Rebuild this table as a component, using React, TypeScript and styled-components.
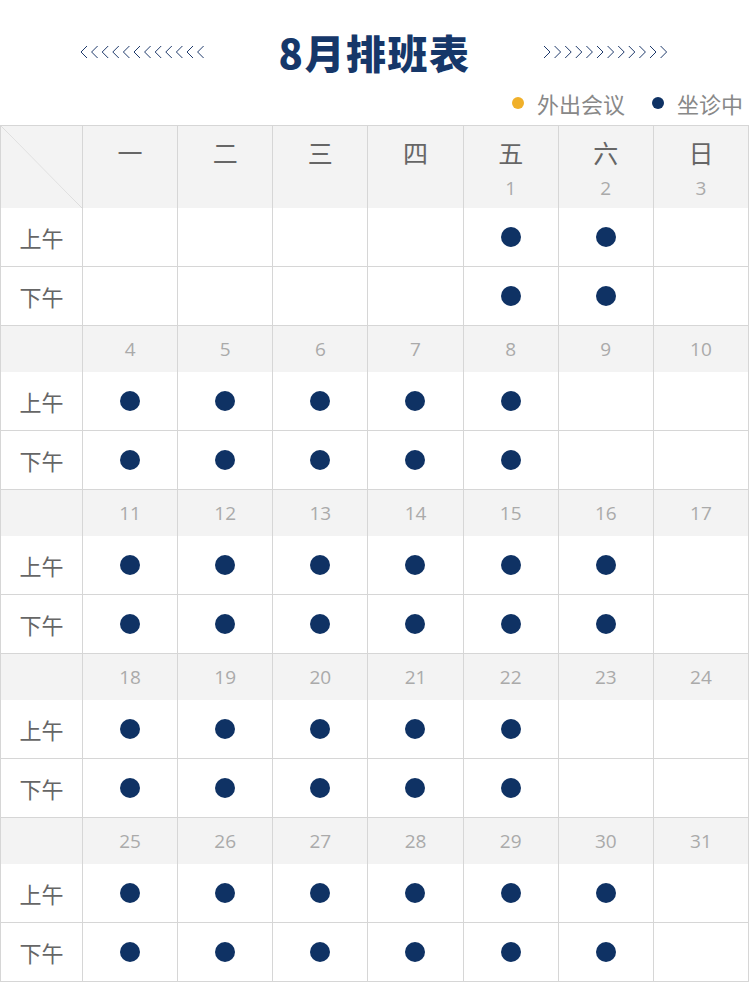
import React from 'react'
import styled, {createGlobalStyle} from 'styled-components'

const GlobalStyle = createGlobalStyle`
  body {
    margin: 0;
    background: #fff;
    font-family: "Open Sans", "Noto Sans CJK SC", sans-serif;
  }
`

const NAVY = '#0f3264'
const WEEKDAYS = ['一', '二', '三', '四', '五', '六', '日']

type Week = {
  dates: (number | null)[]
  am: number[]
  pm: number[]
}

const weeks: Week[] = [
  {dates: [null, null, null, null, 1, 2, 3], am: [0, 0, 0, 0, 1, 1, 0], pm: [0, 0, 0, 0, 1, 1, 0]},
  {dates: [4, 5, 6, 7, 8, 9, 10], am: [1, 1, 1, 1, 1, 0, 0], pm: [1, 1, 1, 1, 1, 0, 0]},
  {dates: [11, 12, 13, 14, 15, 16, 17], am: [1, 1, 1, 1, 1, 1, 0], pm: [1, 1, 1, 1, 1, 1, 0]},
  {dates: [18, 19, 20, 21, 22, 23, 24], am: [1, 1, 1, 1, 1, 0, 0], pm: [1, 1, 1, 1, 1, 0, 0]},
  {dates: [25, 26, 27, 28, 29, 30, 31], am: [1, 1, 1, 1, 1, 1, 0], pm: [1, 1, 1, 1, 1, 1, 0]},
]

const Chevrons = ({dir}: {dir: 'left' | 'right'}) => {
  const items = Array.from({length: 12}, (_, i) => i * 10.6)
  return (
    <svg width='126' height='14' viewBox='0 0 126 14'>
      {items.map((x) => (
        <polyline
          key={x}
          points={dir === 'left'
            ? `${x + 7},1 ${x + 1},7 ${x + 7},13`
            : `${x + 1},1 ${x + 7},7 ${x + 1},13`}
          fill='none'
          stroke='#1f3a6b'
          strokeWidth='1'
        />
      ))}
    </svg>
  )
}

const App = () => {
  return (
    <Page>
      <GlobalStyle />
      <TitleBar>
        <Chevrons dir='left' />
        <Title>8月排班表</Title>
        <Chevrons dir='right' />
      </TitleBar>
      <Legend>
        <LegendItem>
          <Dot $size={12} $color='#f0b02a' />
          外出会议
        </LegendItem>
        <LegendItem>
          <Dot $size={12} $color={NAVY} />
          坐诊中
        </LegendItem>
      </Legend>

      <Table>
        {weeks.map((week, wi) => (
          <React.Fragment key={wi}>
            {wi === 0 ? (
              <>
                <Corner />
                {WEEKDAYS.map((d, i) => (
                  <HeadCell key={d}>
                    <Weekday>{d}</Weekday>
                    {week.dates[i] !== null && <HeadDate>{week.dates[i]}</HeadDate>}
                  </HeadCell>
                ))}
              </>
            ) : (
              <>
                <DateCell />
                {week.dates.map((d, i) => (
                  <DateCell key={i}>{d}</DateCell>
                ))}
              </>
            )}
            <Label>上午</Label>
            {week.am.map((v, i) => (
              <Slot key={'am' + i}>{v ? <Dot $size={20} $color={NAVY} /> : null}</Slot>
            ))}
            <Label>下午</Label>
            {week.pm.map((v, i) => (
              <Slot key={'pm' + i}>{v ? <Dot $size={20} $color={NAVY} /> : null}</Slot>
            ))}
          </React.Fragment>
        ))}
      </Table>
    </Page>
  )
}

export default App

const Page = styled.div`
  width: 749px;
  height: 1000px;
  background: #fff;
`

const TitleBar = styled.div`
  height: 80px;
  padding-top: 12px;
  display: flex;
  align-items: center;
  justify-content: center;
  gap: 73px;
`

const Title = styled.h1`
  margin: 0;
  font-family: "Noto Sans CJK SC", sans-serif;
  font-size: 40px;
  font-weight: 900;
  color: #163769;
  line-height: 1;
  letter-spacing: 1.5px;
`

const Legend = styled.div`
  height: 22px;
  display: flex;
  justify-content: flex-end;
  align-items: center;
  gap: 27px;
  padding-right: 6px;
`

const LegendItem = styled.div`
  display: flex;
  align-items: center;
  gap: 13px;
  font-family: "Noto Sans CJK SC", sans-serif;
  font-size: 22px;
  color: #888;
`

const Dot = styled.span<{$size: number; $color: string}>`
  display: inline-block;
  width: ${(p) => p.$size}px;
  height: ${(p) => p.$size}px;
  border-radius: 50%;
  background: ${(p) => p.$color};
`

const Table = styled.div`
  margin-top: 11px;
  width: 749px;
  box-sizing: border-box;
  display: grid;
  grid-template-columns: 82px repeat(7, 1fr);
  border-top: 1px solid #d6d6d6;
  border-left: 1px solid #d6d6d6;
`

const Cell = styled.div`
  box-sizing: border-box;
  border-right: 1px solid #d6d6d6;
  display: flex;
  align-items: center;
  justify-content: center;
`

const Corner = styled(Cell)`
  height: 82px;
  background-color: #f3f3f3;
  background-image: linear-gradient(
    to top right,
    transparent calc(50% - 0.6px),
    #dcdcdc 50%,
    transparent calc(50% + 0.6px)
  );
`

const HeadCell = styled(Cell)`
  height: 82px;
  background: #f3f3f3;
  flex-direction: column;
  justify-content: flex-start;
  padding-top: 12px;
`

const Weekday = styled.div`
  font-family: "Noto Sans CJK SC", sans-serif;
  font-size: 25px;
  line-height: 28px;
  color: #666;
`

const HeadDate = styled.div`
  margin-top: 10px;
  font-size: 19px;
  line-height: 24px;
  color: #aaa;
`

const DateCell = styled(Cell)`
  height: 46px;
  background: #f3f3f3;
  font-size: 19px;
  color: #aaa;
`

const Label = styled(Cell)`
  height: 59px;
  border-bottom: 1px solid #d6d6d6;
  font-family: "Noto Sans CJK SC", sans-serif;
  font-size: 22px;
  color: #666;
`

const Slot = styled(Cell)`
  height: 59px;
  border-bottom: 1px solid #d6d6d6;
`
